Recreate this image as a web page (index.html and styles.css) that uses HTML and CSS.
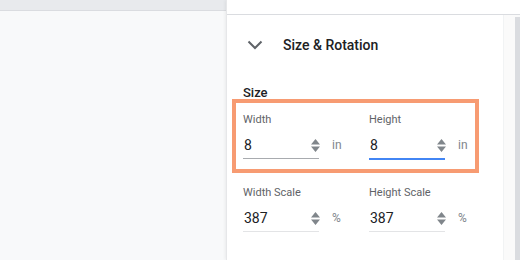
FILE: index.html
```html
<!DOCTYPE html>
<html lang="en">
<head>
    <meta charset="UTF-8">
    <meta name="viewport" content="width=device-width, initial-scale=1.0">
    <title>Size &amp; Rotation</title>
    <link rel="stylesheet" href="styles.css">
</head>
<body>
    <div class="canvas">
        <div class="canvas-top"></div>
    </div>

    <div class="sidebar">
        <div class="sidebar-top"></div>
        <div class="sidebar-body">
            <div class="panel">
                <!-- Section header -->
                <div class="section-header">
                    <span class="chevron">
                        <svg width="24" height="24" viewBox="0 0 24 24"><path d="M5.5 8.5 L12 15 L18.5 8.5" fill="none" stroke="#5f6368" stroke-width="2"/></svg>
                    </span>
                    <span class="section-title">Size &amp; Rotation</span>
                </div>

                <div class="group-title">Size</div>

                <div class="highlight">
                    <div class="field-row">
                        <div class="field">
                            <div class="field-label">Width</div>
                            <div class="input-row">
                                <div class="input">
                                    <span class="value">8</span>
                                    <svg class="spinner" width="9" height="13" viewBox="0 0 9 13"><path d="M4.5 0 L9 5.5 L0 5.5 Z M0 7.5 L9 7.5 L4.5 13 Z" fill="#80868b"/></svg>
                                </div>
                                <span class="unit">in</span>
                            </div>
                        </div>
                        <div class="field">
                            <div class="field-label">Height</div>
                            <div class="input-row">
                                <div class="input focused">
                                    <span class="value">8</span>
                                    <svg class="spinner" width="9" height="13" viewBox="0 0 9 13"><path d="M4.5 0 L9 5.5 L0 5.5 Z M0 7.5 L9 7.5 L4.5 13 Z" fill="#80868b"/></svg>
                                </div>
                                <span class="unit">in</span>
                            </div>
                        </div>
                    </div>
                </div>

                <div class="field-row scale-row">
                    <div class="field">
                        <div class="field-label">Width Scale</div>
                        <div class="input-row">
                            <div class="input light">
                                <span class="value">387</span>
                                <svg class="spinner" width="9" height="13" viewBox="0 0 9 13"><path d="M4.5 0 L9 5.5 L0 5.5 Z M0 7.5 L9 7.5 L4.5 13 Z" fill="#80868b"/></svg>
                            </div>
                            <span class="unit">%</span>
                        </div>
                    </div>
                    <div class="field">
                        <div class="field-label">Height Scale</div>
                        <div class="input-row">
                            <div class="input light">
                                <span class="value">387</span>
                                <svg class="spinner" width="9" height="13" viewBox="0 0 9 13"><path d="M4.5 0 L9 5.5 L0 5.5 Z M0 7.5 L9 7.5 L4.5 13 Z" fill="#80868b"/></svg>
                            </div>
                            <span class="unit">%</span>
                        </div>
                    </div>
                </div>
            </div>

            <div class="gutter">
                <div class="thumb"></div>
            </div>
        </div>
    </div>
</body>
</html>
```

FILE: styles.css
```css
body {
    font-family: Roboto, "Liberation Sans", Arial, sans-serif;
    margin: 0;
    padding: 0;
    width: 520px;
    height: 260px;
    overflow: hidden;
    display: flex;
    background-color: #fff;
}
.canvas {
    width: 226px;
    flex-shrink: 0;
    background-color: #f8f9fa;
}
.canvas-top {
    height: 10px;
    background-color: #e8eaed;
    border-bottom: 1px solid #dadce0;
}
.sidebar {
    flex: 1;
    display: flex;
    flex-direction: column;
    border-left: 1px solid #e6e7e9;
    box-shadow: -1px 0 3px rgba(0, 0, 0, 0.06);
}
.sidebar-top {
    height: 14px;
    flex-shrink: 0;
    border-bottom: 1px solid #dadce0;
}
.sidebar-body {
    flex: 1;
    display: flex;
}
.panel {
    width: 277px;
    flex-shrink: 0;
    padding-left: 16px;
    box-sizing: border-box;
    border-right: 1px solid #f1f3f4;
}
.gutter {
    flex: 1;
    display: flex;
    justify-content: flex-end;
    background-color: #fafafa;
    padding-top: 2px;
}
.thumb {
    width: 5px;
    background-color: #dadce0;
}

/* Section header */
.section-header {
    display: flex;
    align-items: center;
    height: 48px;
    margin-top: 6px;
}
.chevron {
    width: 24px;
    height: 24px;
    display: flex;
}
.section-title {
    margin-left: 16px;
    font-size: 14px;
    font-weight: 500;
    color: #202124;
}
.group-title {
    margin-top: 16px;
    font-size: 13px;
    font-weight: 500;
    line-height: 16px;
    color: #202124;
}

/* Orange highlight box */
.highlight {
    margin-top: -2px;
    margin-left: -11px;
    width: 247px;
    height: 74px;
    box-sizing: border-box;
    border: 4px solid #f79b72;
    padding: 10px 0 0 7px;
}
.field-row {
    display: flex;
}
.scale-row {
    margin-top: 13px;
}
.field {
    width: 126px;
    flex-shrink: 0;
}
.field-label {
    font-size: 11px;
    line-height: 13px;
    color: #5f6368;
}
.input-row {
    display: flex;
    align-items: flex-start;
    margin-top: 9px;
}
.input {
    width: 75px;
    display: flex;
    align-items: center;
    justify-content: space-between;
    padding: 0 0 3px 1px;
    border-bottom: 1px solid #a8abaf;
}
.input.focused {
    border-bottom: 2px solid #4285f4;
}
.input.light {
    border-bottom-color: #e3e4e6;
}
.value {
    font-size: 14px;
    line-height: 20px;
    color: #202124;
}
.spinner {
    margin-right: -1px;
    margin-top: 1px;
}
.unit {
    margin-left: 13px;
    font-size: 12px;
    line-height: 20px;
    color: #80868b;
}
```
